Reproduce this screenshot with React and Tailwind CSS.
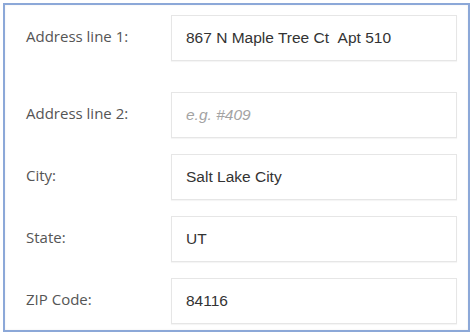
import React from "react";

const rows = [
  { label: "Address line 1:", value: "867 N Maple Tree Ct\u00a0\u00a0Apt 510", mt: "mt-0" },
  { label: "Address line 2:", placeholder: "e.g. #409", mt: "mt-[31px]" },
  { label: "City:", value: "Salt Lake City", mt: "mt-4" },
  { label: "State:", value: "UT", mt: "mt-4" },
  { label: "ZIP Code:", value: "84116", mt: "mt-4" },
];

export default function App() {
  return (
    <main className="w-[474px] h-[336px] bg-white p-[3px]">
      {/* framed form */}
      <div className="w-[467px] h-[329px] border-2 border-[#8ca8d8] pt-[10px] pl-[21px] shadow-[inset_0_0_2px_rgba(0,0,0,0.08)]">
        {rows.map((r) => (
          <div key={r.label} className={`flex items-center ${r.mt}`}>
            <label className="w-[145px] -mt-[3px] text-[15px] text-[#555] font-['Open_Sans',sans-serif]">
              {r.label}
            </label>
            <div className="w-[286px] h-[46px] border border-[#e6e6e6] bg-white flex items-center pl-[14px] shadow-[0_1px_1px_rgba(0,0,0,0.04)] font-['Liberation_Sans',Arial,sans-serif] text-[15.5px]">
              {r.value ? (
                <span className="text-[#333]">{r.value}</span>
              ) : (
                <span className="italic text-[#a3a3a3]">{r.placeholder}</span>
              )}
            </div>
          </div>
        ))}
      </div>
    </main>
  );
}
